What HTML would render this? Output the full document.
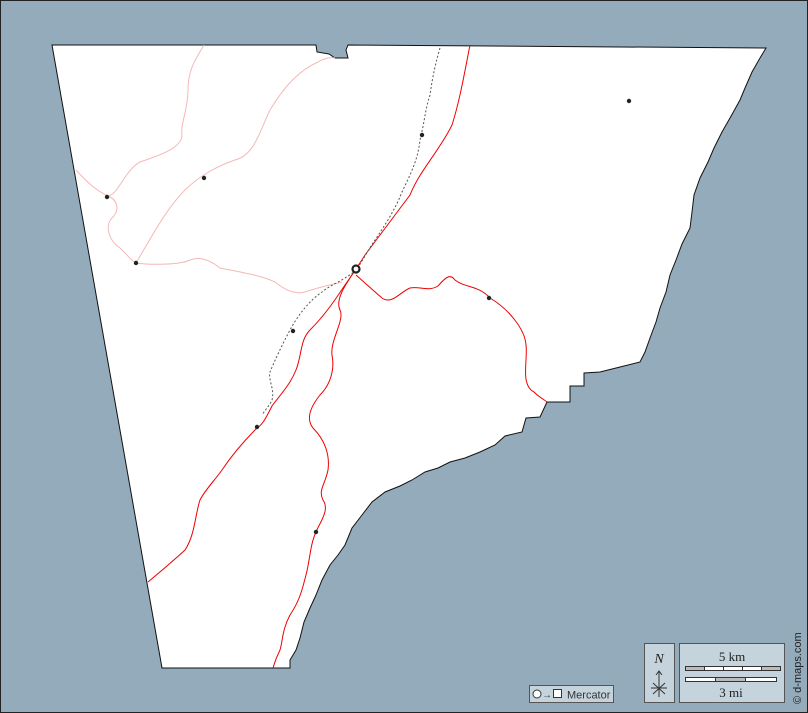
<!DOCTYPE html>
<html><head><meta charset="utf-8"><style>
html,body{margin:0;padding:0;background:#93abbb;}
svg{display:block}
</style></head><body>
<svg width="808" height="713" viewBox="0 0 808 713" xmlns="http://www.w3.org/2000/svg">
<rect x="0.5" y="0.5" width="807" height="712" fill="#93abbb" stroke="#222" stroke-width="1"/>
<path d="M52,45 L316,45 L317,52 L329,54 L335,58 L348,58 L346,50 L348,45 L766,48 L760,58 L752,72 L745,88 L740,100 L730,118 L722,132 L714,148 L708,162 L700,178 L694,195 L692,212 L690,228 L682,244 L676,260 L670,275 L666,292 L660,308 L656,322 L650,338 L645,352 L640,362 L620,367 L600,372 L584,373 L584,386 L570,386 L570,402 L547,402 L540,417 L526,418 L522,432 L505,436 L495,445 L480,452 L465,458 L450,462 L438,468 L425,472 L412,480 L400,486 L385,492 L372,502 L362,515 L352,528 L345,545 L338,555 L330,565 L322,580 L316,595 L310,608 L304,622 L300,638 L296,650 L290,660 L290,668 L162,668 Z" fill="#fff" stroke="#111" stroke-width="1"/>
<g fill="none" stroke-width="1">
<path d="M204,45 C195,60 188,70 188,90 C188,110 180,125 182,135 C182,148 160,155 140,162 C125,170 118,195 108,196 C95,190 85,180 76,170" stroke="#f4b8b8"/>
<path d="M108,196 C118,200 120,210 112,218 C105,225 108,240 120,248 C128,255 130,260 136,263 C150,265 180,265 190,260 C200,256 210,260 220,268 C240,272 260,275 275,282 C285,290 295,295 305,292 C320,287 330,285 342,282" stroke="#f4b8b8"/>
<path d="M136,263 C150,240 165,210 185,190 C200,175 220,165 235,160 C255,155 260,130 270,110 C285,85 300,70 318,62 C325,58 330,57 335,58" stroke="#f4b8b8"/>
<path d="M470,45 C465,70 460,100 452,125 C440,150 420,170 410,195 C395,215 380,235 365,255 L356,269 L345,285 C335,300 325,315 310,330 C300,340 302,355 296,370 C290,385 280,395 272,406 C265,420 262,425 257,428 C245,440 232,455 222,470 C215,480 205,490 200,500 C195,515 195,535 185,550 C172,562 160,572 148,582" stroke="#e00"/>
<path d="M356,269 C345,285 335,300 340,310 C345,320 330,340 332,355 C335,370 330,385 320,395 C312,405 305,418 313,428 C325,440 330,455 328,470 C325,485 318,490 323,500 C330,510 320,522 316,532 C310,545 310,560 306,575 C302,590 300,600 290,615 C282,630 283,640 280,650 C275,660 274,665 273,668" stroke="#e00"/>
<path d="M356,275 C365,283 375,292 382,298 C392,305 400,292 410,288 C420,286 428,292 438,286 C445,278 450,273 455,280 C465,288 478,285 490,298 C510,310 525,330 526,345 C528,360 520,385 534,392 C540,398 545,400 547,402" stroke="#e00"/>
<path d="M440,48 C435,65 432,80 430,95 C425,110 425,120 420,140 C418,160 410,175 402,192 C395,210 385,225 375,240 C368,250 362,262 356,270 C345,280 330,285 322,292 C310,300 298,315 290,330 C282,345 275,360 270,372 C268,380 275,390 272,400 C270,405 265,410 262,415" stroke="#555" stroke-dasharray="2,2"/>
</g>
<g fill="#222">
<circle cx="629" cy="101" r="2.2"/><circle cx="422" cy="135" r="2.2"/><circle cx="204" cy="178" r="2.2"/>
<circle cx="107" cy="197" r="2.2"/><circle cx="136" cy="263" r="2.2"/><circle cx="489" cy="298" r="2.2"/>
<circle cx="293" cy="331" r="2.2"/><circle cx="257" cy="427" r="2.2"/><circle cx="316" cy="532" r="2.2"/>
</g>
<circle cx="356" cy="269" r="3.5" fill="#fff" stroke="#222" stroke-width="2.2"/>
<rect x="529.5" y="685.5" width="84" height="17" fill="#c5d3dc" stroke="#555"/>
<circle cx="537" cy="694" r="4" fill="#fff" stroke="#333"/>
<text x="542" y="698" font-family="Liberation Sans, sans-serif" font-size="10" fill="#333">→</text>
<rect x="553.5" y="689.5" width="8" height="8" fill="#fff" stroke="#333"/>
<text x="567" y="698.5" font-family="Liberation Sans, sans-serif" font-size="11" fill="#333">Mercator</text>
<rect x="644.5" y="643.5" width="30" height="59" fill="#c5d3dc" stroke="#555"/>
<text x="659" y="663" text-anchor="middle" font-family="Liberation Serif, serif" font-style="italic" font-size="14" fill="#222">N</text>
<g stroke="#333" stroke-width="1" fill="none">
<path d="M659,697 L659,671 M656,675 L659,671 L662,675 M651,688 L667,688 M653,683 L665,694 M665,683 L653,694"/>
</g>
<rect x="679.5" y="643.5" width="105" height="59" fill="#c5d3dc" stroke="#555"/>
<text x="732" y="661" text-anchor="middle" font-family="Liberation Serif, serif" font-size="13" fill="#222">5 km</text>
<rect x="685.5" y="666.5" width="95" height="4" fill="#fff" stroke="#333"/>
<rect x="685.5" y="666.5" width="19" height="4" fill="#bbb" stroke="#333"/>
<rect x="723.5" y="666.5" width="19" height="4" fill="#fff" stroke="#333"/>
<rect x="761.5" y="666.5" width="19" height="4" fill="#bbb" stroke="#333"/>
<rect x="685.5" y="677.5" width="91" height="4" fill="#fff" stroke="#333"/>
<rect x="715.5" y="677.5" width="30" height="4" fill="#bbb" stroke="#333"/>
<text x="731" y="697" text-anchor="middle" font-family="Liberation Serif, serif" font-size="13" fill="#222">3 mi</text>
<text transform="translate(801,704) rotate(-90)" font-family="Liberation Sans, sans-serif" font-size="11" fill="#222">© d-maps.com</text>
</svg>
</body></html>
